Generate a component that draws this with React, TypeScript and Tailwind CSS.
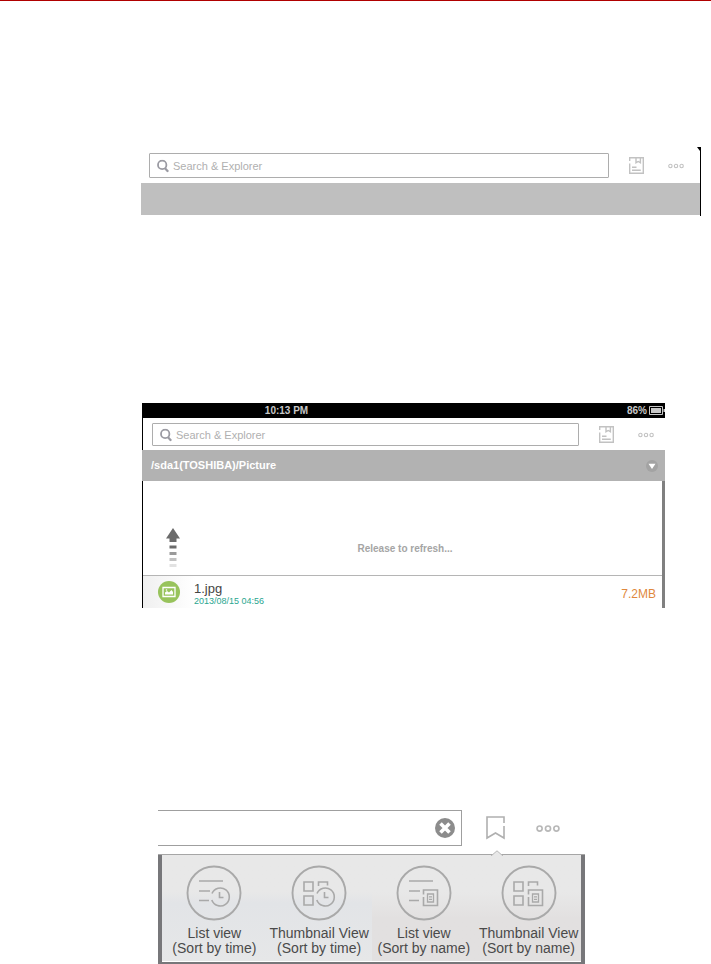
import React, { useState } from 'react';
import clsx from 'clsx';

type SortOption = {
  id: string;
  title: string;
  order: string;
  layout: 'list' | 'grid';
  badge: 'clock' | 'page';
};

const sortOptions: SortOption[] = [
  { id: 'list-time', title: 'List view', order: '(Sort by time)', layout: 'list', badge: 'clock' },
  { id: 'thumb-time', title: 'Thumbnail View', order: '(Sort by time)', layout: 'grid', badge: 'clock' },
  { id: 'list-name', title: 'List view', order: '(Sort by name)', layout: 'list', badge: 'page' },
  { id: 'thumb-name', title: 'Thumbnail View', order: '(Sort by name)', layout: 'grid', badge: 'page' },
];

const SearchIcon = ({ className }: { className?: string }) => (
  <svg viewBox="0 0 12 13" className={clsx('h-[13px] w-3', className)} fill="none" stroke="currentColor">
    <circle cx="5.2" cy="5.4" r="4.2" strokeWidth="1.8" />
    <path d="M7.8 8.4 11.2 12.2" strokeWidth="2.2" />
  </svg>
);

const NotebookIcon = () => (
  <svg viewBox="0 0 15 17" className="h-[17px] w-[15px]" fill="none" stroke="currentColor" strokeWidth="1.4">
    <path d="M.7 4V.8h13.6v15.4H.7V6.5" />
    <path d="M7 1v4.7l2.2-1.2 2.200 1.200V1" />
    <path d="M3 10.300h4.500M3 13.300h8.800" />
  </svg>
);

const DotsIcon = ({ className }: { className?: string }) => (
  <svg viewBox="0 0 16 6" className={className} fill="none" stroke="currentColor" strokeWidth="1.1">
    <circle cx="2.4" cy="3" r="1.7" />
    <circle cx="8" cy="3" r="1.7" />
    <circle cx="13.6" cy="3" r="1.7" />
  </svg>
);

const SortIcon = ({ layout, badge }: { layout: SortOption['layout']; badge: SortOption['badge'] }) => (
  <svg viewBox="0 0 56 56" className="h-14 w-14" fill="none" stroke="#a9a9a9" strokeWidth="1.6">
    <circle cx="28" cy="28" r="26.5" strokeWidth="1.9" />
    {layout === 'list' ? (
      <path d="M13 16h24M13 26h11M13 35.500h10" />
    ) : (
      <path d="M13 17h9v9h-9zM13 31h9v9h-9zM27.500 21v-4h9v3.500" />
    )}
    {badge === 'clock' ? (
      <>
        <path d="M26 28.500A9 9 0 1 1 25.800 35" />
        <path d="M33.500 27v5.500h4" />
      </>
    ) : (
      <>
        <path d="M27.500 29.500V25h14v15.500h-14V32" />
        <path d="M31.500 29h6v8h-6zM33 31.800h3M33 34.300h3" strokeWidth="1.3" />
      </>
    )}
  </svg>
);

const SearchBox = ({ id }: { id: string }) => (
  <div className="relative h-full min-w-0 flex-1">
    <label htmlFor={id} className="absolute top-1/2 left-2 -translate-y-1/2 text-[#9b9ba3]">
      <SearchIcon />
    </label>
    <input
      id={id}
      type="text"
      aria-label="Search & Explorer"
      placeholder="Search & Explorer"
      className="block h-full w-full rounded-[1px] border border-[#adadad] bg-white pr-2 pl-[23px] text-[11px] text-gray-600 outline-none placeholder:text-[#b0b0b0]"
    />
  </div>
);

const ToolbarButtons = () => (
  <div className="flex items-center text-[#c2c2c2]">
    <button type="button" aria-label="Bookmarks" className="ml-5">
      <NotebookIcon />
    </button>
    <button type="button" aria-label="More" className="ml-6">
      <DotsIcon className="h-[6px] w-4" />
    </button>
  </div>
);

const RefreshArrow = () => (
  <svg viewBox="0 0 14 40" className="h-10 w-[14px]">
    <path d="M7 0 14 10.500h-3.500V14h-7v-3.500H0z" fill="#6b6b6b" />
    <path d="M3.500 17.500h7v3h-7z" fill="#6b6b6b" />
    <path d="M3.500 24h7v3h-7z" fill="#9a9a9a" />
    <path d="M3.500 30h7v3h-7z" fill="#c2c2c2" />
    <path d="M3.500 36h7v3h-7z" fill="#e2e2e2" />
  </svg>
);

const App: React.FC = () => {
  const [query, setQuery] = useState('');

  return (
    <main className="min-h-screen bg-white font-['Liberation_Sans',Arial,sans-serif]">
      <div className="h-px bg-[#b00000]" />

      {/* Search bar */}
      <section className="relative mt-[146px] mr-[10px] ml-[141px] border-r border-black">
        <svg viewBox="0 0 3 4" className="absolute top-0 right-0 h-1 w-[3px]">
          <path d="M0 0h3v4z" fill="#000" />
        </svg>
        <div className="flex h-9 items-center pt-[6px] pr-4 pb-[5px] pl-2">
          <SearchBox id="search-top" />
          <ToolbarButtons />
        </div>
        <div className="h-8 bg-[#bfbfbf]" />
        <div className="h-px" />
      </section>

      {/* File browser, pulled down to refresh */}
      <section className="mt-[187px] mr-[46px] ml-[142px]">
        <div className="flex h-[15px] items-center bg-black text-[10px] leading-[15px] font-bold text-[#c8c8c8]">
          <span className="flex-1" />
          <span className="-ml-[234px]">10:13 PM</span>
          <span className="flex flex-1 items-center justify-end gap-[2px]">
            86%
            <svg viewBox="0 0 16 9" className="h-[9px] w-4">
              <path d="M.5.500h13v8H.5z" fill="none" stroke="#c8c8c8" />
              <path d="M2 2h10v5H2zM14.500 3H16v3h-1.500z" fill="#c8c8c8" />
            </svg>
          </span>
        </div>
        <div className="flex h-8 items-center border-l border-black pt-[5px] pr-[11px] pb-1 pl-[9px]">
          <SearchBox id="search-files" />
          <ToolbarButtons />
        </div>
        <div className="flex h-[31px] items-center justify-between bg-[#b2b2b2] pr-[7px] pl-[9px]">
          <h2 className="text-[11px] font-bold text-white">/sda1(TOSHIBA)/Picture</h2>
          <button type="button" aria-label="Show path">
            <svg viewBox="0 0 12 12" className="h-3 w-3">
              <circle cx="6" cy="6" r="6" fill="#a3a3a3" />
              <path d="M2.500 3.800h7L6 9z" fill="#fff" />
            </svg>
          </button>
        </div>
        <div className="border-r-[3px] border-l border-r-[#808080] border-l-black">
          <div className="flex h-[95px] items-end border-b border-[#b5b5b5] pb-[7px] pl-[23px]">
            <RefreshArrow />
            <p className="flex-1 pr-[32px] pb-3 text-center text-[10px] leading-[14px] font-bold text-[#a5a5a5]">
              Release to refresh...
            </p>
          </div>
          <div className="flex h-8 items-center bg-linear-to-r from-[#f0f0f0] to-white to-10% pr-[6px] pl-[15px]">
            <svg viewBox="0 0 22 22" className="h-[22px] w-[22px]">
              <circle cx="11" cy="11" r="11" fill="#98c35c" />
              <path d="M5 6.500h12v9H5z" fill="none" stroke="#fff" strokeWidth="1.3" />
              <path d="M7 13.500v-2l2-1.500 2 1.500 2.500-2.500 1.500 2v2.500z" fill="#fff" />
              <circle cx="8.500" cy="9" r=".8" fill="#fff" />
            </svg>
            <div className="ml-[14px] flex-1 pt-[3px]">
              <p className="text-[13px] leading-[15px] text-[#444]">1.jpg</p>
              <p className="text-[9px] leading-[10px] text-[#2aa690]">2013/08/15 04:56</p>
            </div>
            <p className="pt-[3px] text-[12px] text-[#e0883c]">7.2MB</p>
          </div>
        </div>
      </section>

      {/* View and sort menu */}
      <section className="mt-[202px] mr-[126px] ml-[158px]">
        <div className="flex h-9 items-center">
          <div className="relative h-full min-w-0 flex-1">
            <input
              type="text"
              aria-label="Search"
              value={query}
              onChange={(e) => setQuery(e.target.value)}
              className="block h-full w-full border border-l-0 border-[#9f9f9f] bg-white pr-9 pl-2 text-sm outline-none"
            />
            <button type="button" aria-label="Clear" onClick={() => setQuery('')} className="absolute top-2 right-[7px]">
              <svg viewBox="0 0 20 20" className="h-5 w-5">
                <circle cx="10" cy="10" r="10" fill="#8c8c8c" />
                <path d="m5.500 5.500 9 9m0-9-9 9" stroke="#fff" strokeWidth="3.6" />
              </svg>
            </button>
          </div>
          <button type="button" aria-label="Bookmark" className="ml-6 text-[#b0b0b0]">
            <svg viewBox="0 0 19 24" className="h-6 w-[19px]" fill="none" stroke="currentColor" strokeWidth="1.6">
              <path d="M18 7V1H1v21l8.500-5 8.500 5V10" />
            </svg>
          </button>
          <button type="button" aria-label="More" className="mr-[25px] ml-[31px] text-[#b8b8b8]">
            <DotsIcon className="h-[9px] w-6" />
          </button>
        </div>
        <div className="relative mt-2 border-t border-[#a6a6a6] bg-[#77777a] px-1 pb-[2px]">
          <svg viewBox="0 0 12 6" className="absolute -top-[5px] right-[82px] h-[6px] w-3">
            <path d="M0 6 6 .8 12 6" fill="#e8e8e8" stroke="#b8b8b8" />
          </svg>
          <div className="grid h-[107px] grid-cols-4 border-b border-white bg-linear-to-b from-[#e8e8e8] from-35% via-[#e2e4e7] via-45% to-[#e6e7e8]">
            {sortOptions.map((option) => (
              <button
                key={option.id}
                type="button"
                className={clsx(
                  'flex flex-col items-center pt-[10px] text-[14px] leading-[15px] whitespace-nowrap text-[#4a4a4a]',
                  option.badge === 'page' && 'bg-linear-to-b from-[#e8e8e8] from-35% to-[#e2e0e0] to-60%'
                )}
              >
                <SortIcon layout={option.layout} badge={option.badge} />
                <span className="mt-[5px]">{option.title}</span>
                <span>{option.order}</span>
              </button>
            ))}
          </div>
        </div>
      </section>
    </main>
  );
};

export default App;
